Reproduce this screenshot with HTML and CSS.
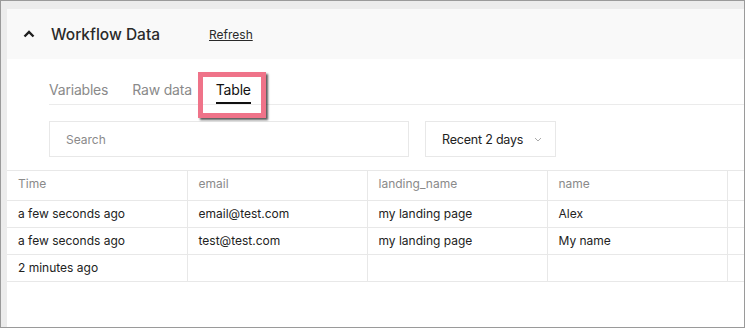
FILE: index.html
```html
<!DOCTYPE html>
<html lang="en">
<head>
  <meta charset="UTF-8" />
  <title>Workflow Data</title>
  <link rel="stylesheet" href="styles.css">
</head>
<body>
  <div class="panel">
    <!-- Header -->
    <div class="panel-header">
      <svg class="collapse-icon" width="12" height="8" viewBox="0 0 12 8">
        <path d="M1.5 6.5 L6 2 L10.5 6.5" fill="none" stroke="#1f1f1f" stroke-width="2.4"/>
      </svg>
      <span class="panel-title">Workflow Data</span>
      <a class="refresh-link" href="#">Refresh</a>
    </div>

    <!-- Tabs -->
    <div class="tabs">
      <span class="tab">Variables</span>
      <span class="tab">Raw data</span>
      <span class="tab active">Table<span class="tab-highlight"></span></span>
    </div>

    <!-- Filters -->
    <div class="filters">
      <input class="search-input" type="text" placeholder="Search">
      <div class="range-select">
        <span>Recent 2 days</span>
        <svg width="8" height="5" viewBox="0 0 8 5">
          <path d="M1 1 L4 4 L7 1" fill="none" stroke="#aaa" stroke-width="1"/>
        </svg>
      </div>
    </div>

    <table class="data-table">
      <thead>
        <tr>
          <th>Time</th>
          <th>email</th>
          <th>landing_name</th>
          <th>name</th>
          <th class="filler"></th>
        </tr>
      </thead>
      <tbody>
        <tr>
          <td>a few seconds ago</td>
          <td>email@test.com</td>
          <td>my landing page</td>
          <td>Alex</td>
          <td class="filler"></td>
        </tr>
        <tr>
          <td>a few seconds ago</td>
          <td>test@test.com</td>
          <td>my landing page</td>
          <td>My name</td>
          <td class="filler"></td>
        </tr>
        <tr>
          <td>2 minutes ago</td>
          <td></td>
          <td></td>
          <td></td>
          <td class="filler"></td>
        </tr>
      </tbody>
    </table>
  </div>
</body>
</html>
```

FILE: styles.css
```css
html, body {
  margin: 0;
  height: 100%;
}

body {
  box-sizing: border-box;
  border: 1px solid #9a9a9a;
  background: #ececec;
  padding: 8px 0 0 6px;
  font-family: Inter, "Noto Sans", sans-serif;
  color: #222;
  overflow: hidden;
}

.panel {
  background: #fff;
  height: 100%;
}

/* Header */
.panel-header {
  display: flex;
  align-items: center;
  height: 50px;
  background: #f9f9f9;
  padding-left: 16px;
}

.collapse-icon {
  margin-right: 16px;
}

.panel-title {
  font-size: 15.5px;
  font-weight: 500;
  color: #2a2a2a;
  width: 158px;
}

.refresh-link {
  font-size: 12px;
  color: #2a2a2a;
  text-decoration: underline;
}

/* Tabs */
.tabs {
  display: flex;
  gap: 24px;
  margin-left: 42px;
  border-bottom: 1px solid #ebebeb;
}

.tab {
  position: relative;
  padding-top: 21px;
  padding-bottom: 2px;
  line-height: 20px;
  font-size: 14px;
  letter-spacing: -0.2px;
  color: #8a8a8a;
  border-bottom: 2px solid transparent;
}

.tab.active {
  color: #111;
  border-bottom-color: #111;
}

.tab-highlight {
  position: absolute;
  left: -18px;
  top: 13px;
  width: 68px;
  height: 46px;
  box-sizing: border-box;
  border: 5px solid #ef7389;
  box-shadow: 2px 2px 2px rgba(0, 0, 0, 0.65);
}

/* Filters */
.filters {
  display: flex;
  gap: 16px;
  margin: 16px 0 13px 42px;
}

.search-input {
  box-sizing: border-box;
  width: 360px;
  height: 36px;
  border: 1px solid #e8e8e8;
  padding: 0 16px;
  font-family: inherit;
  font-size: 12px;
  outline: none;
}

.search-input::placeholder {
  color: #8a8a8a;
}

.range-select {
  box-sizing: border-box;
  display: flex;
  align-items: center;
  gap: 11px;
  width: 131px;
  height: 36px;
  border: 1px solid #e8e8e8;
  padding-left: 16px;
  font-size: 12.5px;
  letter-spacing: -0.2px;
  color: #222;
}

/* Table */
.data-table {
  width: 100%;
  border-collapse: collapse;
  table-layout: fixed;
  font-size: 12px;
}

.data-table th,
.data-table td {
  width: 180px;
  box-sizing: border-box;
  text-align: left;
  padding: 0 0 0 11px;
  border-top: 1px solid #e8e8e8;
  border-bottom: 1px solid #e8e8e8;
  border-right: 1px solid #e8e8e8;
  white-space: nowrap;
}

.data-table th {
  height: 30px;
  padding-bottom: 4px;
  font-weight: 400;
  color: #8a8a8a;
}

.data-table td {
  height: 27px;
  padding-bottom: 1px;
}

.data-table .filler {
  width: auto;
  border-right: none;
}
```
